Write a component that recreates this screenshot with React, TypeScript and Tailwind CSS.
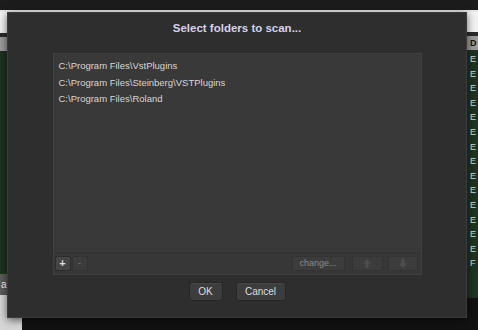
import React from "react";

const font = { fontFamily: '"Liberation Sans", Arial, sans-serif' };

function Arrow({ down }: { down?: boolean }) {
  return (
    <svg width="8" height="9" viewBox="0 0 8 9" className={down ? "rotate-180" : ""}>
      <path d="M4 0 L8 4.5 L5.5 4.5 L5.5 9 L2.5 9 L2.5 4.5 L0 4.5 Z" fill="#4e4e4e" />
    </svg>
  );
}

export default function App() {
  const rows = Array.from({ length: 15 }, (_, i) => (i === 14 ? "F" : "E"));
  return (
    <div className="relative w-[478px] h-[330px] overflow-hidden bg-[#121212]" style={font}>
      {/* background application */}
      <div className="flex flex-col h-full">
        <div className="h-[10px] bg-[#1c1c1c]" />
        <div className="h-[2px] bg-[#e8e8e8]" />
        <div className="flex flex-1">
          <div className="w-[24px] flex flex-col">
            <div className="h-[21px] bg-[#f2f2f2]" />
            <div className="h-[4px] bg-[#2a2a2a]" />
            <div className="h-[14px] bg-[#9c9c9c]" />
            <div className="h-[223px] bg-[#1e3321]" />
            <div className="h-[21px] bg-[#5c5c5c] flex items-center pl-[1px] text-[10px] text-white">a</div>
            <div className="flex-1 flex">
              <div className="w-[22px] bg-[#d6d6d6]" />
            </div>
          </div>
          <div className="flex-1" />
          <div className="w-[11px] flex flex-col">
            <div className="h-[20px] bg-[#f2f2f2]" />
            <div className="h-[4px] bg-[#2a2a2a]" />
            <div className="h-[14px] bg-[#9c9c9c] pl-[3px] text-[9px] leading-[14px] text-[#111] font-bold">D</div>
            <div className="h-[248px] bg-[#1e3321] flex flex-col pt-[2px] pl-[3px]">
              {rows.map((r, i) => (
                <div key={i} className="h-[14.6px] text-[9px] leading-[14.6px] text-[#d8e0d8]">{r}</div>
              ))}
            </div>
          </div>
        </div>
      </div>

      {/* dialog */}
      <div className="absolute left-[7px] top-[12px] w-[460px] h-[306px] bg-[#2e2e2e] border border-[#3c3c3c] shadow-[0_2px_8px_rgba(0,0,0,0.6)] flex flex-col items-center">
        <div className="mt-[8px] h-[14px] text-[11.5px] leading-[14px] font-bold text-[#d4d2ec]">Select folders to scan...</div>
        <div className="mt-[18px] w-[369px] h-[222px] bg-[#393939] border border-[#404040] flex flex-col">
          <div className="flex-1 pl-[5px] pt-[4px] text-[9.5px] text-[#d6d6d6]">
            <div className="h-[16.5px] leading-[16.5px]">C:\Program Files\VstPlugins</div>
            <div className="h-[16.5px] leading-[16.5px]">C:\Program Files\Steinberg\VSTPlugins</div>
            <div className="h-[16.5px] leading-[16.5px]">C:\Program Files\Roland</div>
          </div>
          <div className="h-[22px] border-t border-[#333333] bg-[#373737] flex items-center px-[1px]">
            <div className="w-[16px] h-[15px] rounded-[2px] bg-[#454545] border border-[#2c2c2c] flex items-center justify-center text-[11px] font-bold text-[#dcdcdc] leading-none">+</div>
            <div className="ml-[1px] w-[16px] h-[15px] rounded-[2px] bg-[#3c3c3c] border border-[#333] flex items-center justify-center text-[9px] text-[#777] leading-none">-</div>
            <div className="flex-1" />
            <div className="w-[53px] h-[15px] rounded-[2px] bg-[#3c3c3c] border border-[#333] flex items-center justify-center text-[9px] text-[#8a8a8a] leading-none">change...</div>
            <div className="ml-[7px] w-[31px] h-[15px] rounded-[2px] bg-[#3c3c3c] border border-[#333] flex items-center justify-center">
              <Arrow />
            </div>
            <div className="ml-[5px] mr-[2px] w-[30px] h-[15px] rounded-[2px] bg-[#3c3c3c] border border-[#333] flex items-center justify-center">
              <Arrow down />
            </div>
          </div>
        </div>
        <div className="mt-[7px] flex gap-[13px]">
          <div className="w-[34px] h-[19px] rounded-[3px] bg-[#3d3d3d] border border-[#262626] shadow-[inset_0_1px_0_rgba(255,255,255,0.06)] flex items-center justify-center text-[10px] text-[#dedede]">OK</div>
          <div className="w-[50px] h-[19px] rounded-[3px] bg-[#3d3d3d] border border-[#262626] shadow-[inset_0_1px_0_rgba(255,255,255,0.06)] flex items-center justify-center text-[10px] text-[#dedede]">Cancel</div>
        </div>
      </div>
    </div>
  );
}
